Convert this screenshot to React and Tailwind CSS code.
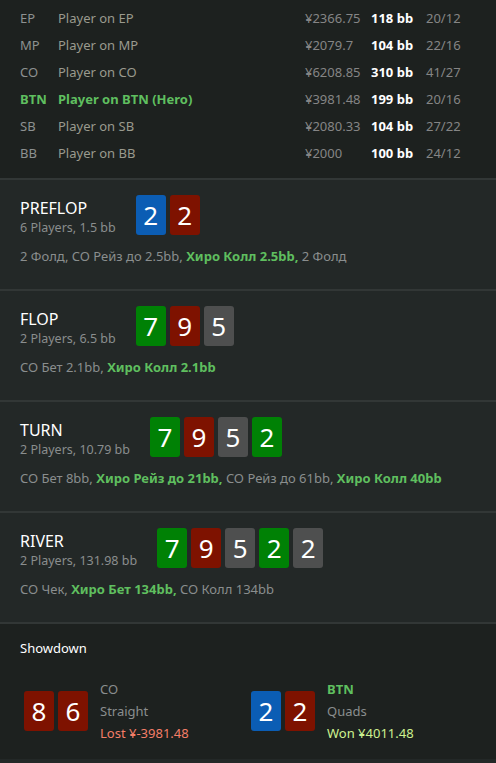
import React from "react";

const font = { fontFamily: '"Noto Sans", "Open Sans", sans-serif' };

// joueurs de la table
const players = [
  { pos: "EP", name: "Player on EP", money: "¥2366.75", bb: "118 bb", stats: "20/12" },
  { pos: "MP", name: "Player on MP", money: "¥2079.7", bb: "104 bb", stats: "22/16" },
  { pos: "CO", name: "Player on CO", money: "¥6208.85", bb: "310 bb", stats: "41/27" },
  { pos: "BTN", name: "Player on BTN (Hero)", money: "¥3981.48", bb: "199 bb", stats: "20/16", hero: true },
  { pos: "SB", name: "Player on SB", money: "¥2080.33", bb: "104 bb", stats: "27/22" },
  { pos: "BB", name: "Player on BB", money: "¥2000", bb: "100 bb", stats: "24/12" },
];

const cardColors = {
  b: "bg-[#0b5db4]",
  r: "bg-[#7e1200]",
  g: "bg-[#008105]",
  k: "bg-[#4e4f4f]",
};

const Card = ({ v, c }) => (
  <div className={`${cardColors[c]} w-[30px] h-[40px] rounded-[3px] flex items-center justify-center text-white text-[26px] leading-none`}>
    {v}
  </div>
);

const streets = [
  {
    title: "PREFLOP",
    sub: "6 Players, 1.5 bb",
    cards: [["2", "b"], ["2", "r"]],
    actions: [["2 Фолд, CO Рейз до 2.5bb, "], ["Хиро Колл 2.5bb,", true], [" 2 Фолд"]],
  },
  {
    title: "FLOP",
    sub: "2 Players, 6.5 bb",
    cards: [["7", "g"], ["9", "r"], ["5", "k"]],
    actions: [["CO Бет 2.1bb, "], ["Хиро Колл 2.1bb", true]],
  },
  {
    title: "TURN",
    sub: "2 Players, 10.79 bb",
    cards: [["7", "g"], ["9", "r"], ["5", "k"], ["2", "g"]],
    actions: [["CO Бет 8bb, "], ["Хиро Рейз до 21bb,", true], [" CO Рейз до 61bb, "], ["Хиро Колл 40bb", true]],
  },
  {
    title: "RIVER",
    sub: "2 Players, 131.98 bb",
    cards: [["7", "g"], ["9", "r"], ["5", "k"], ["2", "g"], ["2", "k"]],
    actions: [["CO Чек, "], ["Хиро Бет 134bb,", true], [" CO Колл 134bb"]],
  },
];

const App = () => {
  return (
    <div className="w-[496px] min-h-[763px] bg-[#232827] text-[13px]" style={font}>
      {/* table des joueurs */}
      <div className="bg-[#1d211f] pt-[5px] pb-[11px] border-b-2 border-[#323736]">
        {players.map((p) => (
          <div key={p.pos} className="flex items-center h-[27px]">
            <div className={`w-[58px] pl-5 ${p.hero ? "text-[#5fbf5f] font-bold" : "text-[#8d9191]"}`}>{p.pos}</div>
            <div className={`flex-1 ${p.hero ? "text-[#5fbf5f] font-bold" : "text-[#9a9a8e]"}`}>{p.name}</div>
            <div className="w-[66px] text-[#858585]">{p.money}</div>
            <div className="w-[55px] text-white font-bold">{p.bb}</div>
            <div className="w-[70px] text-[#858585]">{p.stats}</div>
          </div>
        ))}
      </div>

      {/* streets */}
      {streets.map((s) => (
        <div key={s.title} className="h-[111px] px-5 pt-[15px] border-b-2 border-[#323736]">
          <div className="flex items-start gap-5">
            <div className="pt-[2px]">
              <div className="text-white text-[16px] leading-[22px]">{s.title}</div>
              <div className="text-[#8a8e8e] text-[12.5px] leading-[18px]">{s.sub}</div>
            </div>
            <div className="flex gap-1">
              {s.cards.map(([v, c], i) => (
                <Card key={i} v={v} c={c} />
              ))}
            </div>
          </div>
          <div className="mt-[10px] text-[#8a8e8e]">
            {s.actions.map(([t, hero], i) => (
              <span key={i} className={hero ? "text-[#5fbf5f] font-bold" : ""}>{t}</span>
            ))}
          </div>
        </div>
      ))}

      {/* showdown */}
      <div className="bg-[#1d211f] h-[135px] px-5 pt-[15px]">
        <div className="text-white">Showdown</div>
        <div className="flex mt-[19px] pl-1">
          <div className="flex items-center w-[227px]">
            <div className="flex gap-1">
              <Card v="8" c="r" />
              <Card v="6" c="r" />
            </div>
            <div className="ml-[12px] leading-[22px]">
              <div className="text-[#8a8e8e]">CO</div>
              <div className="text-[#8a8e8e]">Straight</div>
              <div className="text-[#f47e68]">Lost ¥-3981.48</div>
            </div>
          </div>
          <div className="flex items-center">
            <div className="flex gap-1">
              <Card v="2" c="b" />
              <Card v="2" c="r" />
            </div>
            <div className="ml-[12px] leading-[22px]">
              <div className="text-[#5fbf5f] font-bold">BTN</div>
              <div className="text-[#8a8e8e]">Quads</div>
              <div className="text-[#cdf290]">Won ¥4011.48</div>
            </div>
          </div>
        </div>
      </div>
    </div>
  );
};

export default App;
